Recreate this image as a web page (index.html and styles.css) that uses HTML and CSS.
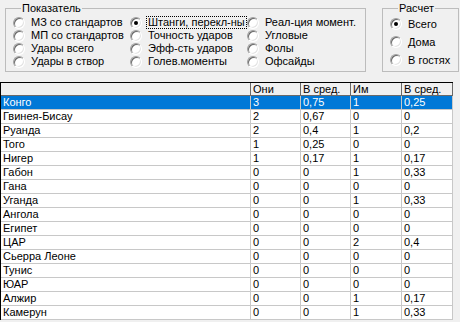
FILE: index.html
```html
<!DOCTYPE html>
<html lang="ru">

<head>
    <meta charset="UTF-8">
    <title>Статистика</title>
    <link rel="stylesheet" href="styles.css">
</head>

<body>
    <div class="top">
        <fieldset class="group pokaz">
            <legend>Показатель</legend>
            <div class="radios">
                <div class="radio"><span class="dot"></span><span class="text">МЗ со стандартов</span></div>
                <div class="radio"><span class="dot on"></span><span class="text focus">Штанги, перекл-ны</span></div>
                <div class="radio"><span class="dot"></span><span class="text">Реал-ция момент.</span></div>
                <div class="radio"><span class="dot"></span><span class="text">МП со стандартов</span></div>
                <div class="radio"><span class="dot"></span><span class="text">Точность ударов</span></div>
                <div class="radio"><span class="dot"></span><span class="text">Угловые</span></div>
                <div class="radio"><span class="dot"></span><span class="text">Удары всего</span></div>
                <div class="radio"><span class="dot"></span><span class="text">Эфф-сть ударов</span></div>
                <div class="radio"><span class="dot"></span><span class="text">Фолы</span></div>
                <div class="radio"><span class="dot"></span><span class="text">Удары в створ</span></div>
                <div class="radio"><span class="dot"></span><span class="text">Голев.моменты</span></div>
                <div class="radio"><span class="dot"></span><span class="text">Офсайды</span></div>
            </div>
        </fieldset>
        <fieldset class="group raschet">
            <legend>Расчет</legend>
            <div class="radio"><span class="dot on"></span><span class="text">Всего</span></div>
            <div class="radio"><span class="dot"></span><span class="text">Дома</span></div>
            <div class="radio"><span class="dot"></span><span class="text">В гостях</span></div>
        </fieldset>
    </div>

    <div class="grid">
        <div class="row head">
            <div></div><div>Они</div><div>В сред.</div><div>Им</div><div>В сред.</div>
        </div>
        <div class="row sel">
            <div>Конго</div><div>3</div><div>0,75</div><div>1</div><div>0,25</div>
        </div>
        <div class="row">
            <div>Гвинея-Бисау</div><div>2</div><div>0,67</div><div>0</div><div>0</div>
        </div>
        <div class="row">
            <div>Руанда</div><div>2</div><div>0,4</div><div>1</div><div>0,2</div>
        </div>
        <div class="row">
            <div>Того</div><div>1</div><div>0,25</div><div>0</div><div>0</div>
        </div>
        <div class="row">
            <div>Нигер</div><div>1</div><div>0,17</div><div>1</div><div>0,17</div>
        </div>
        <div class="row">
            <div>Габон</div><div>0</div><div>0</div><div>1</div><div>0,33</div>
        </div>
        <div class="row">
            <div>Гана</div><div>0</div><div>0</div><div>0</div><div>0</div>
        </div>
        <div class="row">
            <div>Уганда</div><div>0</div><div>0</div><div>1</div><div>0,33</div>
        </div>
        <div class="row">
            <div>Ангола</div><div>0</div><div>0</div><div>0</div><div>0</div>
        </div>
        <div class="row">
            <div>Египет</div><div>0</div><div>0</div><div>0</div><div>0</div>
        </div>
        <div class="row">
            <div>ЦАР</div><div>0</div><div>0</div><div>2</div><div>0,4</div>
        </div>
        <div class="row">
            <div>Сьерра Леоне</div><div>0</div><div>0</div><div>0</div><div>0</div>
        </div>
        <div class="row">
            <div>Тунис</div><div>0</div><div>0</div><div>0</div><div>0</div>
        </div>
        <div class="row">
            <div>ЮАР</div><div>0</div><div>0</div><div>0</div><div>0</div>
        </div>
        <div class="row">
            <div>Алжир</div><div>0</div><div>0</div><div>1</div><div>0,17</div>
        </div>
        <div class="row">
            <div>Камерун</div><div>0</div><div>0</div><div>1</div><div>0,33</div>
        </div>
    </div>
</body>

</html>
```

FILE: styles.css
```css
* {
    box-sizing: border-box;
}

body {
    margin: 0;
    background-color: #f0f0f0;
    font-family: "Liberation Sans", Arial, sans-serif;
    font-size: 11px;
    color: #000;
    overflow: hidden;
}

.top {
    display: flex;
    align-items: flex-start;
    gap: 16px;
    padding: 2px 0 0 5px;
    height: 82px;
}

.group {
    margin: 0;
    border: 1px solid #bcbcbc;
    min-width: 0;
}

.group legend {
    padding: 0 1px;
    margin-left: 8px;
    line-height: 13px;
}

.pokaz {
    width: 361px;
    padding: 1px 7px 3px;
}

.raschet {
    width: 77px;
    padding: 0 7px 2px;
}

.radios {
    display: grid;
    grid-template-columns: 117px 117px 110px;
}

.radio {
    display: flex;
    align-items: center;
    height: 13px;
    white-space: nowrap;
}

.raschet .radio {
    height: 18px;
}

.dot {
    flex: none;
    position: relative;
    width: 12px;
    height: 12px;
    border-radius: 50%;
    background: #fff;
    border: 1px solid;
    border-color: #a0a0a0 #fff #fff #a0a0a0;
    box-shadow: inset 1px 1px 0 #696969, inset -1px -1px 0 #e3e3e3;
}

.dot.on::after {
    content: "";
    position: absolute;
    left: 3px;
    top: 3px;
    width: 4px;
    height: 4px;
    border-radius: 50%;
    background: #000;
}

.text {
    margin-left: 4px;
    padding: 0 1px;
    border: 1px solid transparent;
    line-height: 11px;
}

.text.focus {
    border: 1px dotted #000;
    width: 101px;
    overflow: hidden;
}

.grid {
    width: 453px;
    border-top: 1px solid #000;
    border-left: 1px solid #000;
}

.row {
    display: grid;
    grid-template-columns: 250px 50px 50px 51px 51px;
    height: 14px;
    background: #fff;
}

.row div {
    border-right: 1px solid #c8c8c8;
    border-bottom: 1px solid #c8c8c8;
    padding-left: 2px;
    line-height: 13px;
    white-space: nowrap;
    overflow: hidden;
}

.row.head {
    height: 13px;
    background: #f0f0f0;
}

.row.head div {
    border-color: #696969;
    line-height: 12px;
}

.row.sel {
    background: #0078d7;
    color: #fff;
}
```
